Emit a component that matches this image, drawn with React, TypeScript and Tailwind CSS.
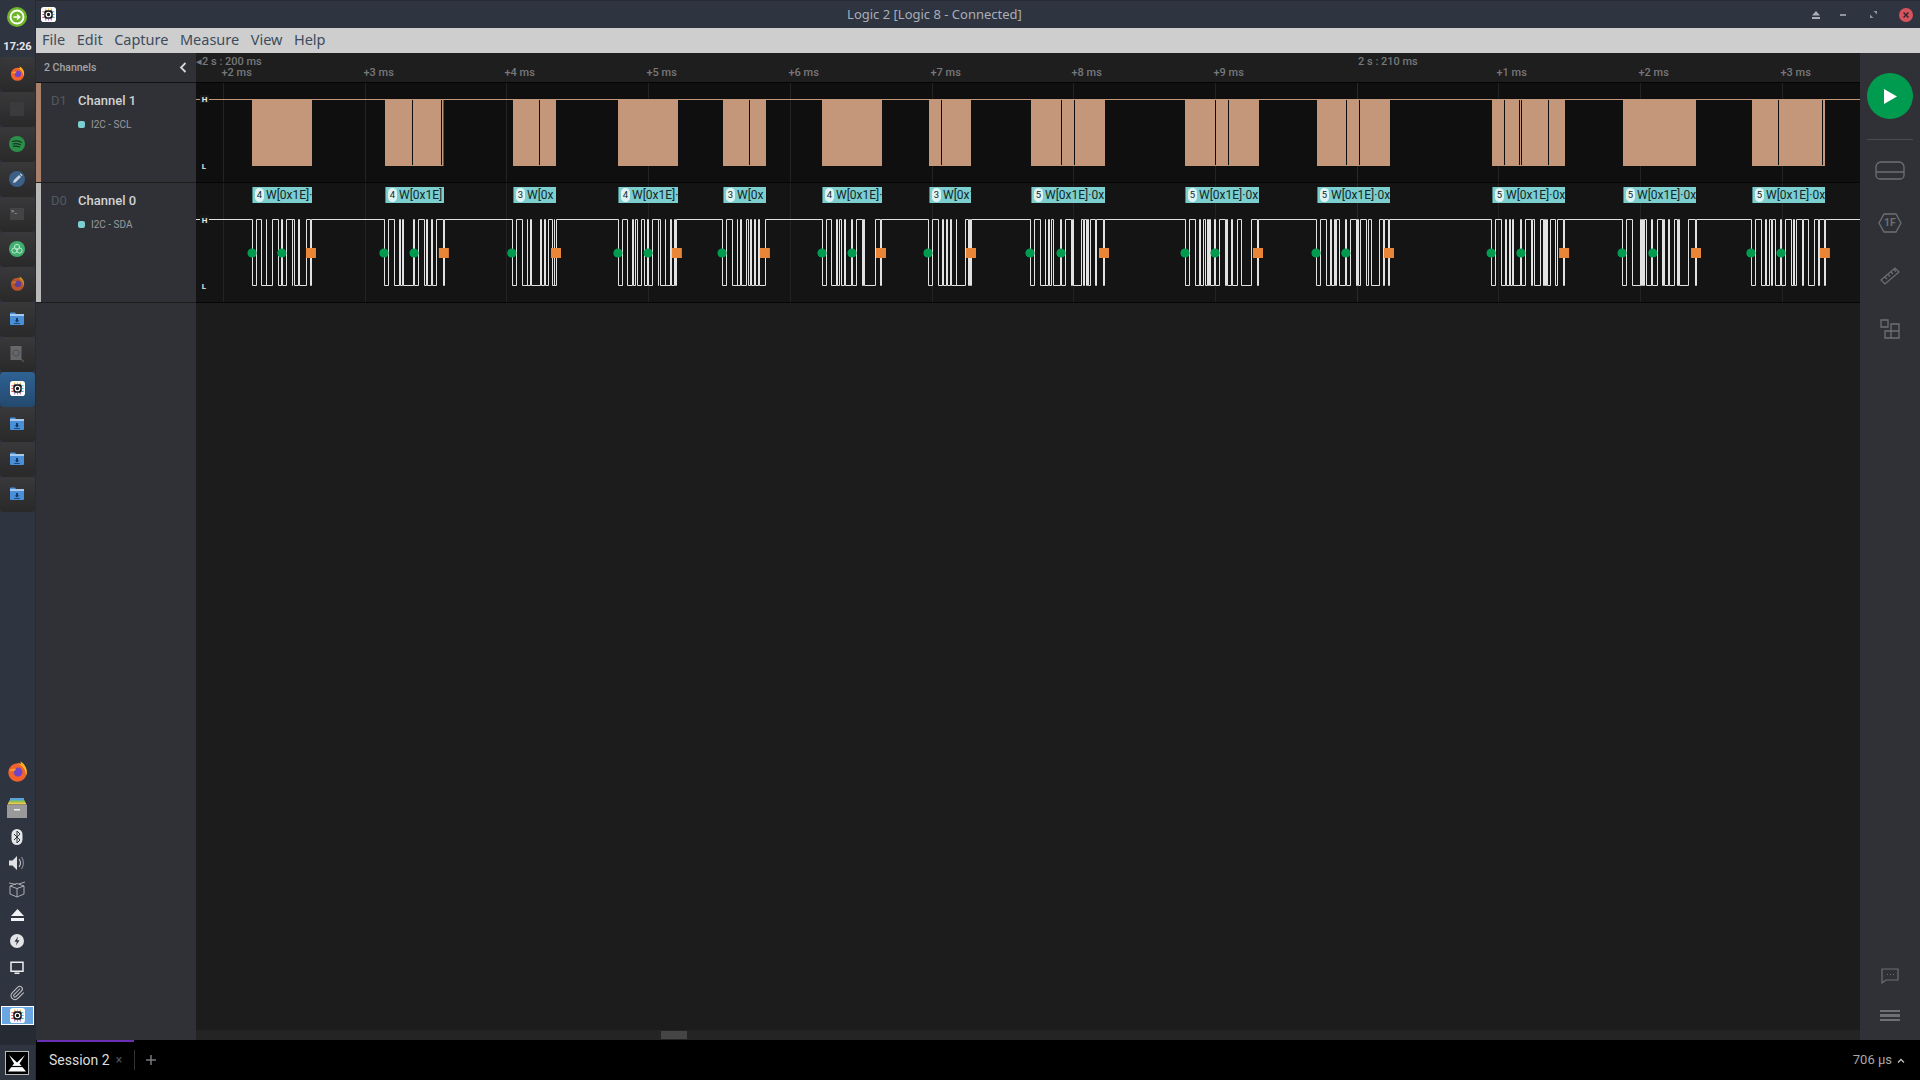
import { ReactNode } from 'react';
import { Paperclip } from 'lucide-react';

const font = { fontFamily: 'Roboto, "Noto Sans", sans-serif' };

// trace edges are measured off crops, so each group carries its own origin and scale
const a = (x: number) => 245 + x / 2.987;
const b = (x: number) => 815 + x / 3;
const c = (x: number) => 1310 + x / 2.987;

interface Burst {
  start: number;
  end: number;
  gaps: number[];
  count: number;
  label: string;
  edges: number[];
  starts: number[];
  stop: number;
}

const bursts: Burst[] = [
  { start: 252, end: 312, gaps: [], count: 4, label: 'W[0x1E]·', edges: [22, 35, 49, 64.5, 65.5, 83, 100, 109, 112, 124, 141, 143, 147, 159, 162, 185, 196, 198].map(a), starts: [a(21), a(110)], stop: a(197) },
  { start: 385, end: 443.5, gaps: [412, 441.5], count: 4, label: 'W[0x1E]', edges: [416, 429, 446, 462, 463.5, 470, 473, 504, 507, 519, 536, 542, 545, 558, 559.5, 572, 592, 595].map(a), starts: [a(415), a(505)], stop: a(594) },
  { start: 513, end: 556, gaps: [539.5], count: 3, label: 'W[0x', edges: [798, 811, 828, 843, 844.5, 852, 855, 882, 885, 894, 897, 907, 918, 923.5, 925, 931].map(a), starts: [a(797)], stop: a(929) },
  { start: 618, end: 678, gaps: [], count: 4, label: 'W[0x1E]·', edges: [1115, 1128, 1143, 1158, 1159.5, 1166, 1173, 1185, 1194, 1202, 1205, 1218, 1234, 1236, 1240, 1256, 1257.5, 1270, 1273, 1283, 1287, 1290].map(a), starts: [a(1114), a(1204)], stop: a(1290) },
  { start: 723, end: 766, gaps: [749.5], count: 3, label: 'W[0x', edges: [1426, 1439, 1456, 1470, 1472, 1480, 1483, 1497, 1503, 1509, 1512, 1521, 1524, 1533, 1537, 1554].map(a), starts: [a(1425)], stop: a(1553) },
  { start: 822, end: 882, gaps: [], count: 4, label: 'W[0x1E]·', edges: [22, 35, 49, 64.5, 66, 73, 80, 87, 90, 109, 112, 125, 142, 144, 148, 182, 196, 199].map(b), starts: [b(21), b(111)], stop: b(198) },
  { start: 929, end: 971, gaps: [941], count: 3, label: 'W[0x1', edges: [340, 353, 370, 382, 385, 394, 397, 406, 409, 424, 425.5, 452, 460, 463, 466, 469].map(b), starts: [b(339)], stop: b(468) },
  { start: 1031, end: 1105, gaps: [1061.4, 1074.4], count: 5, label: 'W[0x1E]·0x', edges: [646, 659, 676, 691, 692.5, 701, 704, 709, 714, 737, 740, 752, 769, 771, 776, 798, 805, 807, 815, 817, 819, 825, 841, 844, 865, 868].map(b), starts: [b(645), b(738)], stop: b(867) },
  { start: 1185, end: 1259, gaps: [1215.6, 1228.6], count: 5, label: 'W[0x1E]·0x', edges: [1111, 1124, 1141, 1154, 1157, 1165, 1172, 1177, 1180, 1184, 1187, 1199, 1202, 1214, 1231, 1233, 1237, 1249, 1252, 1268, 1280, 1310, 1327, 1330].map(b), starts: [b(1110), b(1200)], stop: b(1329) },
  { start: 1317, end: 1390, gaps: [1346.5, 1359.5], count: 5, label: 'W[0x1E]·0x', edges: [19, 32, 49, 61, 64, 73, 76, 79, 88, 106, 108.5, 120, 138, 141, 144, 150, 168, 175, 185, 208, 220, 222, 235, 237.5].map(c), starts: [c(18), c(107)], stop: c(236) },
  { start: 1492, end: 1565, gaps: [1504.3, 1519.7, 1521.7, 1548.3], count: 5, label: 'W[0x1E]·0x', edges: [542, 555, 572, 584, 587, 596, 599, 604, 607, 628, 631, 645, 661, 666, 670, 688, 696, 699, 702, 706, 708.5, 718, 733, 740, 757, 760].map(c), starts: [c(541), c(630)], stop: c(759) },
  { start: 1623, end: 1696, gaps: [], count: 5, label: 'W[0x1E]·0x', edges: [933, 946, 964, 988, 990, 993, 996, 1000, 1005, 1019, 1022, 1038, 1052, 1056, 1060, 1070, 1075, 1088, 1098, 1102, 1103.5, 1130, 1151, 1154].map(c), starts: [c(932), c(1024)], stop: c(1153) },
  { start: 1752, end: 1825, gaps: [1778.3, 1822.7], count: 5, label: 'W[0x1E]·0x', edges: [1318, 1330, 1348, 1362, 1363.5, 1373, 1378, 1381, 1390, 1405, 1408, 1420, 1438, 1444, 1447, 1453, 1472, 1474, 1488, 1507, 1519, 1522, 1536, 1539].map(c), starts: [c(1317), c(1407)], stop: c(1538) },
];

const ticks = ['+2 ms', '+3 ms', '+4 ms', '+5 ms', '+6 ms', '+7 ms', '+8 ms', '+9 ms', '', '+1 ms', '+2 ms', '+3 ms'];
const tickX = (i: number) => Math.floor(223.5 + i * 141.7 - 196) + 0.5;
const WIDTH = 1664;

function LogicLogo({ size = 15 }: { size?: number }) {
  return (
    <svg width={size} height={size} viewBox="0 0 16 16">
      <rect width="16" height="16" rx="3" fill="#fff" />
      <path d="M5 1.500v2M8 1.500v2M11 1.500v2" stroke="#f5b82e" strokeWidth="1.200" />
      <path d="M1.500 5h2M1.500 8h2M1.500 11h2" stroke="#e5484d" strokeWidth="1.200" />
      <path d="M12.500 5h2M12.500 8h2M12.500 11h2" stroke="#38b6e8" strokeWidth="1.200" />
      <path d="M5 12.500v2M8 12.500v2M11 12.500v2" stroke="#b06ad9" strokeWidth="1.200" />
      <rect x="3.500" y="3.500" width="9" height="9" rx="2" fill="#16161a" />
      <circle cx="8" cy="8" r="2.400" fill="none" stroke="#fff" strokeWidth="1.300" />
    </svg>
  );
}

function Firefox({ size = 21, dim = false }: { size?: number; dim?: boolean }) {
  return (
    <svg width={size} height={size} viewBox="0 0 20 20" className={dim ? 'opacity-70' : ''}>
      <circle cx="10" cy="11" r="8.800" fill="#f2632b" />
      <path d="M10 2.200c4 .2 8.800 3 8.800 8.800 0 1-.2 2-.5 2.800C18 8 15 4.500 10 2.200z" fill="#ffcb2e" />
      <path d="M12.500 .4c3.500 1.500 6.200 5.300 6.300 9.400-1.400-3-3-4.300-5.500-5.300.2-1.300-.1-2.900-.8-4.100z" fill="#ffb020" />
      <circle cx="10.500" cy="10.500" r="4.200" fill="#6f45c9" />
      <path d="M2 9c1.500-1.500 4-2 7-1.500L6.500 10z" fill="#ff9a2e" />
    </svg>
  );
}

function Folder() {
  return (
    <svg width="14" height="13" viewBox="0 0 14 13">
      <path d="M0 1.500A1 1 0 0 1 1 .5h4l1 1.500h8v10a1 1 0 0 1-1 1H1a1 1 0 0 1-1-1z" fill="#4a90d9" />
      <rect x="0" y="2" width="14" height="2" fill="#a5c8ec" />
      <path d="M6 6h2v2.500h1.500L7 10.500 4.500 8.500H6zM4 11h6v.8H4z" fill="#123a66" />
    </svg>
  );
}

function Tile({ children, active = false }: { children?: ReactNode; active?: boolean }) {
  return (
    <div
      className={
        active
          ? 'w-[35px] h-[35px] pb-[2px] pr-[1px] rounded-[4px] flex items-center justify-center bg-linear-to-b from-[#2f6293] to-[#24496e]'
          : 'w-[35px] h-[35px] pb-[2px] pr-[1px] rounded-[4px] flex items-center justify-center bg-linear-to-b from-[#39393b] to-[#29292a]'
      }
    >
      {children}
    </div>
  );
}

function Dock() {
  return (
    <div className="w-[36px] h-full shrink-0 flex flex-col bg-[#2e3440] border-r border-[#262a33]">
      <div className="h-[34px] flex items-center justify-center pr-[1px]">
        <svg width="20" height="20" viewBox="0 0 20 20">
          <circle cx="10" cy="10" r="10" fill="#6fb52c" />
          <circle cx="10" cy="10" r="6.500" fill="none" stroke="#fff" strokeWidth="1.800" />
          <path d="M6.500 10h6M10 7.500l2.700 2.500L10 12.500" fill="none" stroke="#fff" strokeWidth="1.500" />
        </svg>
      </div>
      <div className="h-[23px] pt-[3px] flex items-center justify-center text-[11px] font-bold text-[#e4e8ee]" style={font}>
        17:26
      </div>
      <Tile><Firefox size={15} /></Tile>
      <Tile><div className="w-[14px] h-[14px] bg-[#3b3b3d]" /></Tile>
      <Tile>
        <svg width="16" height="16" viewBox="0 0 16 16">
          <circle cx="8" cy="8" r="8" fill="#2b8f4a" />
          <path d="M3.500 5.500c3-.9 6-.7 9 .8M4 8c2.500-.7 5-.5 7.500.7M4.500 10.400c2-.5 4.200-.4 6 .6" fill="none" stroke="#17331f" strokeWidth="1.200" strokeLinecap="round" />
        </svg>
      </Tile>
      <Tile>
        <svg width="16" height="16" viewBox="0 0 16 16">
          <circle cx="8" cy="8" r="8" fill="#3b5f87" />
          <path d="M4 12l.7-2.700 5.300-5.300 2 2-5.300 5.300zM10.700 3.300l1-.8 1.800 1.800-.8 1z" fill="#c9d3de" />
        </svg>
      </Tile>
      <Tile>
        <div className="w-[14px] h-[12px] bg-[#444446] text-[6px] leading-[6px] text-[#cfcfcf] pl-[1px]" style={font}>
          &gt;_
        </div>
      </Tile>
      <Tile>
        <svg width="16" height="16" viewBox="0 0 16 16">
          <circle cx="8" cy="8" r="8" fill="#3fae6e" />
          <circle cx="8" cy="6" r="2.600" fill="none" stroke="#bfe9cf" />
          <circle cx="5.500" cy="9.500" r="2.600" fill="none" stroke="#bfe9cf" />
          <circle cx="10.500" cy="9.500" r="2.600" fill="none" stroke="#bfe9cf" />
        </svg>
      </Tile>
      <Tile><Firefox size={15} dim /></Tile>
      <Tile><Folder /></Tile>
      <Tile>
        <svg width="14" height="16" viewBox="0 0 14 16" className="opacity-60">
          <rect x="0.500" width="11" height="14" fill="#8a8a8a" />
          <circle cx="6" cy="7" r="3" fill="none" stroke="#5a6a78" strokeWidth="1.200" />
          <path d="M11 13l3 3" stroke="#777" strokeWidth="1.200" />
        </svg>
      </Tile>
      <Tile active><LogicLogo /></Tile>
      <Tile><Folder /></Tile>
      <Tile><Folder /></Tile>
      <Tile><Folder /></Tile>

      <div className="flex-1" />

      <div className="flex flex-col items-center pr-[1px]">
        <div className="h-[35px] pb-[7px] flex items-center"><Firefox /></div>
        <div className="h-[32px] flex items-center">
          <svg width="20" height="20" viewBox="0 0 20 20">
            <rect x="3" y="0" width="14" height="3" fill="#5aa3d8" />
            <rect x="2" y="2.500" width="16" height="3" fill="#8cc152" />
            <rect x="1" y="4.500" width="18" height="2" fill="#f0c94a" />
            <path d="M0 6.500h20V20H0z" fill="#9a9a9a" />
            <rect x="7" y="11" width="6" height="1.500" fill="#f0f0f0" />
          </svg>
        </div>
        <div className="h-[26px] flex items-center">
          <svg width="12" height="16" viewBox="0 0 12 16">
            <rect width="11" height="16" x="0.500" rx="5.500" fill="#e3e5e8" />
            <path d="M3 5l6 6-3 3V2l3 3-6 6" fill="none" stroke="#2e3440" strokeWidth="1" />
          </svg>
        </div>
        <div className="h-[26px] flex items-center">
          <svg width="16" height="14" viewBox="0 0 16 14">
            <path d="M0 4.500h3.500L8 0v14l-4.500-4.500H0z" fill="#dfe1e4" />
            <path d="M10 3c1.800 2.400 1.800 5.600 0 8" fill="none" stroke="#dfe1e4" strokeWidth="1.200" opacity="0.800" />
            <path d="M12.500 1c2.500 3.500 2.500 8.500 0 12" fill="none" stroke="#8a8f99" strokeWidth="1.100" />
          </svg>
        </div>
        <div className="h-[26px] flex items-center">
          <svg width="18" height="17" viewBox="0 0 18 17" fill="none" stroke="#a9adb3" strokeWidth="1">
            <path d="M2 5l7 2.500 7-2.500v8L9 16l-7-3zM9 7.500V16M2 5l7-2.500L16 5M1 2l7 1.500M17 1l-6 2" />
          </svg>
        </div>
        <div className="h-[25px] flex items-center">
          <svg width="13" height="12" viewBox="0 0 13 12">
            <path d="M6.500 0L13 7H0z" fill="#f1f2f3" />
            <rect y="9" width="13" height="3" fill="#f1f2f3" />
          </svg>
        </div>
        <div className="h-[28px] flex items-center">
          <svg width="14" height="14" viewBox="0 0 14 14">
            <circle cx="7" cy="7" r="7" fill="#e3e4e6" />
            <path d="M8 2.500L4.500 7.800h2.300L6 11.500l3.500-5.300H7.200z" fill="#2e3440" />
          </svg>
        </div>
        <div className="h-[25px] flex items-center">
          <svg width="14" height="13" viewBox="0 0 14 13">
            <path d="M1 1.200h12v9H1zM4.500 12.200h5" fill="none" stroke="#eceded" strokeWidth="1.500" />
          </svg>
        </div>
        <div className="h-[26px] flex items-center">
          <Paperclip size={16} color="#bfc1c4" strokeWidth={1.6} />
        </div>
      </div>
      <div className="mx-[1px] h-[19px] flex items-center justify-center bg-[#6aa7e2] border border-white">
        <LogicLogo />
      </div>
      <div className="h-[20px] bg-[#252a33]" />
      <div className="h-[35px] flex items-center justify-center pr-[1px]">
        <svg width="24" height="24" viewBox="0 0 24 24">
          <rect x="0.500" y="0.500" width="23" height="23" fill="#000" stroke="#b9b9b9" />
          <path d="M4 4l8 7.500L20 4l-5.500 8.500 6.500 8H3l6-8z" fill="#fff" />
          <path d="M4 15.500h16" stroke="#000" strokeWidth="1.200" />
        </svg>
      </div>
    </div>
  );
}

function TitleBar() {
  return (
    <div className="h-[28px] shrink-0 bg-[#2e3440] border-t border-[#262a33] flex items-center pl-[5px] pr-[4px] relative">
      <LogicLogo />
      <div className="flex-1 text-center text-[13px] text-[#a9aeb8] pl-[2px]" style={{ fontFamily: '"Noto Sans", sans-serif' }}>
        Logic 2 [Logic 8 - Connected]
      </div>
      <div className="flex items-center">
        <svg width="10" height="8" viewBox="0 0 10 8" className="mr-[19px]">
          <path d="M5 0l4 4.500H1z" fill="#a9aeb8" />
          <rect x="1" y="6" width="8" height="2" fill="#a9aeb8" />
        </svg>
        <div className="w-[6px] h-[2px] bg-[#8f94a0] mr-[24px]" />
        <svg width="7" height="7" viewBox="0 0 7 7" className="mr-[22px]">
          <path d="M3.500 0H7v3.500zM0 3.500V7h3.500z" fill="#8f94a0" />
        </svg>
        <div className="w-[14px] h-[14px] rounded-full bg-[#d9535f] flex items-center justify-center mr-[3px]">
          <svg width="6" height="6" viewBox="0 0 6 6">
            <path d="M.5.500l5 5M5.500.500l-5 5" stroke="#2e2a30" strokeWidth="1.500" />
          </svg>
        </div>
      </div>
    </div>
  );
}

function MenuBar() {
  return (
    <div
      className="h-[25px] shrink-0 bg-[#cecece] flex items-center gap-[11.500px] pl-[6px] pb-[2px] text-[14.500px] text-[#3d4c5c]"
      style={{ fontFamily: '"Noto Sans", sans-serif' }}
    >
      <span>File</span>
      <span>Edit</span>
      <span>Capture</span>
      <span>Measure</span>
      <span>View</span>
      <span>Help</span>
    </div>
  );
}

function ChannelLabel({ id, name, analyzer, strip, height }: { id: string; name: string; analyzer: string; strip: string; height: string }) {
  return (
    <div className={`${height} flex border-b border-[#1c1c1c]`}>
      <div className={`w-[5px] ${strip}`} />
      <div className="flex-1 pl-[10px] pt-[8px]">
        <div className="flex items-center">
          <span className="w-[27px] text-[13px] text-[#55585e]">{id}</span>
          <span className="text-[13px] font-medium text-[#d0d1d3]">{name}</span>
        </div>
        <div className="flex items-center mt-[6px] ml-[27px]">
          <span className="w-[7px] h-[7px] rounded-[2px] bg-[#7ccfcf] mr-[6px]" />
          <span className="text-[10px] text-[#9a9b9e]">{analyzer}</span>
        </div>
      </div>
    </div>
  );
}

function Sidebar() {
  return (
    <div className="w-[160px] shrink-0 bg-[#2f3136] flex flex-col" style={font}>
      <div className="h-[30px] flex items-center justify-between pl-[8px] pr-[9px] border-b border-[#111]">
        <span className="text-[10.500px] font-medium text-[#a4a5a8]">2 Channels</span>
        <svg width="8" height="11" viewBox="0 0 8 11">
          <path d="M6.500 1L2 5.500 6.500 10" fill="none" stroke="#d5d6d8" strokeWidth="1.800" />
        </svg>
      </div>
      <ChannelLabel id="D1" name="Channel 1" analyzer="I2C - SCL" strip="bg-[#a9806a]" height="h-[100px]" />
      <ChannelLabel id="D0" name="Channel 0" analyzer="I2C - SDA" strip="bg-[#b9b9b9]" height="h-[120px]" />
    </div>
  );
}

function GridLines({ height }: { height: number }) {
  return (
    <>
      {ticks.map((_, i) => (
        <line key={i} x1={tickX(i)} x2={tickX(i)} y1={0} y2={height} stroke={i === 8 ? '#2a2a2a' : '#232323'} strokeWidth="1" />
      ))}
    </>
  );
}

function LevelMarks({ high, low }: { high: number; low: number }) {
  const textProps = { fontSize: 8, fontWeight: 700, fill: '#e8e8e8', textAnchor: 'middle' as const, style: font };
  return (
    <>
      <rect x={4} y={high - 4} width={9} height={8} fill="#1a1a1a" />
      <text x={8.500} y={high + 3} {...textProps}>H</text>
      <text x={8} y={low + 3} {...textProps}>L</text>
    </>
  );
}

function ClockRow() {
  const high = 16;
  const low = 83;
  return (
    <div className="h-[100px] bg-[#0f0f0f] border-b border-[#050505]">
      <svg width={WIDTH} height={99} className="block">
        <GridLines height={99} />
        <line x1={0} x2={WIDTH} y1={high + 0.500} y2={high + 0.500} stroke="#c4967a" strokeWidth="1" />
        {bursts.map((burst) => (
          <g key={burst.start}>
            <rect x={burst.start - 196} y={high} width={burst.end - burst.start} height={low - high} fill="#c4967a" />
            {burst.gaps.map((gap) => (
              <rect key={gap} x={Math.floor(gap) - 196} y={high + 1} width={1} height={low - high - 2} fill="#0f0f0f" />
            ))}
          </g>
        ))}
        <LevelMarks high={high} low={low} />
      </svg>
    </div>
  );
}

function tracePath(high: number, low: number) {
  let d = `M0 ${high}`;
  bursts.forEach((burst) => {
    burst.edges.forEach((x, i) => {
      // snap to the pixel grid so single edges stay one pixel wide
      const px = Math.floor(x - 196) + 0.5;
      d += ` H${px} V${i % 2 === 0 ? low : high}`;
    });
  });
  return `${d} H${WIDTH}`;
}

function DataRow() {
  const high = 36.500;
  const low = 102.500;
  return (
    <div className="h-[120px] bg-[#141414] border-b border-[#050505] relative overflow-hidden">
      <svg width={WIDTH} height={119} className="block">
        <GridLines height={119} />
        <path d={tracePath(high, low)} fill="none" stroke="#e2e2e2" strokeWidth="1" />
        {bursts.map((burst) => (
          <g key={burst.start}>
            {burst.starts.map((x) => (
              <circle key={x} cx={x - 196} cy={70} r={4.600} fill="#009b4f" />
            ))}
            <rect x={burst.stop - 196 - 5} y={65} width={10} height={10} fill="#e98537" />
          </g>
        ))}
        <LevelMarks high={high} low={low} />
      </svg>
      {bursts.map((burst) => (
        <div
          key={burst.start}
          className="absolute top-[4px] h-[16px] bg-[#7dcfcf] border-l border-[#4c7f80] overflow-hidden flex items-center whitespace-nowrap text-[12px] text-[#12272a]"
          style={{ ...font, left: burst.start - 196, width: burst.end - burst.start }}
        >
          <span className="w-[9px] h-[14px] ml-[2px] mr-[2px] shrink-0 rounded-[5px] bg-[#e0f4f4] text-[9.500px] leading-[14px] text-center">
            {burst.count}
          </span>
          {burst.label}
        </div>
      ))}
    </div>
  );
}

function Timeline() {
  return (
    <div className="flex-1 flex flex-col min-w-0 bg-[#1c1c1c]">
      <div className="h-[30px] shrink-0 relative bg-[#1e1e1e] border-b border-[#050505] text-[11px] font-medium text-[#77787a]" style={font}>
        <span className="absolute left-[0px] top-[1px]">◂2 s : 200 ms</span>
        <span className="absolute left-[1162px] top-[1px]">2 s : 210 ms</span>
        {ticks.map((label, i) =>
          label ? (
            <span key={i} className="absolute top-[12px]" style={{ left: tickX(i) - 2 }}>
              {label}
            </span>
          ) : null,
        )}
      </div>
      <ClockRow />
      <DataRow />
      <div className="flex-1" />
      <div className="h-[10px] shrink-0 bg-[#242424] relative">
        <div className="absolute left-[465px] top-[1px] w-[26px] h-[8px] bg-[#454545]" />
      </div>
    </div>
  );
}

function RightPanel() {
  return (
    <div className="w-[60px] shrink-0 bg-[#2f3136] flex flex-col items-center text-[#6d6f75]">
      <div className="w-[46px] h-[46px] mt-[20px] rounded-full bg-[#009b4f] flex items-center justify-center">
        <svg width="14" height="15" viewBox="0 0 14 15">
          <path d="M1 0l13 7.500L1 15z" fill="#fff" />
        </svg>
      </div>
      <div className="w-[46px] h-px bg-[#4a4c52] mt-[20px]" />
      <svg width="30" height="20" viewBox="0 0 30 20" fill="none" stroke="currentColor" strokeWidth="1.300" className="mt-[20px]">
        <path d="M1 12V7a5 5 0 0 1 5-5h18a5 5 0 0 1 5 5v5zM1 12v3a4 4 0 0 0 4 4h20a4 4 0 0 0 4-4v-3" />
      </svg>
      <div className="mt-[33px] w-[24px] h-[20px] relative flex items-center justify-center text-[10.500px] font-bold" style={font}>
        <svg width="24" height="20" viewBox="0 0 24 20" fill="none" stroke="currentColor" strokeWidth="1.300" className="absolute inset-0">
          <path d="M6 1h12l5 9-5 9H6l-5-9z" />
        </svg>
        1F
      </div>
      <svg width="20" height="20" viewBox="0 0 20 20" fill="none" stroke="currentColor" strokeWidth="1.200" className="mt-[33px]">
        <path d="M1 14L15 2l4 4L5 18zM5 11l2 2M8 8.500l2 2M11 6l2 2M14 3.500l2 2" />
      </svg>
      <svg width="20" height="20" viewBox="0 0 20 20" fill="none" stroke="currentColor" strokeWidth="1.300" className="mt-[33px]">
        <path d="M1 1h7v7H1zM11 5h8v7h-8zM5 12h6v7H5zM11 12h8v7h-8z" />
      </svg>
      <div className="flex-1" />
      <svg width="18" height="16" viewBox="0 0 18 16" fill="none" stroke="currentColor" strokeWidth="1.200">
        <path d="M1 1h16v11H5l-4 3z" />
        <path d="M6 6.500h1M9 6.500h1M12 6.500h1" />
      </svg>
      <div className="mt-[26px] mb-[19px] flex flex-col gap-[2px]">
        <div className="w-[20px] h-[2.500px] bg-current" />
        <div className="w-[20px] h-[2.500px] bg-current" />
        <div className="w-[20px] h-[2.500px] bg-current" />
      </div>
    </div>
  );
}

function SessionBar() {
  return (
    <div className="h-[40px] shrink-0 bg-black flex items-center relative" style={font}>
      <div className="w-[97px] h-[40px] ml-px border-t-2 border-[#6a2fb5] flex items-center pl-[12px] pb-[2px] shrink-0">
        <span className="text-[14px] text-[#dcdcdc]">Session 2</span>
        <span className="text-[12px] text-[#55585e] ml-[6px]">×</span>
      </div>
      <div className="w-px h-[20px] bg-[#333]" />
      <svg width="10" height="10" viewBox="0 0 10 10" className="ml-[11px]">
        <path d="M5 0v10M0 5h10" stroke="#77797d" strokeWidth="1.500" />
      </svg>
      <div className="flex-1" />
      <span className="text-[13px] text-[#a8a8a8] mr-[5px]">706 µs</span>
      <svg width="8" height="5" viewBox="0 0 8 5" className="mr-[15px]">
        <path d="M1 4.500l3-3 3 3" fill="none" stroke="#c0c0c0" strokeWidth="1.300" />
      </svg>
    </div>
  );
}

export default function App() {
  return (
    <div className="w-[1920px] h-[1080px] flex overflow-hidden bg-[#1c1c1c]">
      <Dock />
      <div className="flex-1 min-w-0 flex flex-col">
        <TitleBar />
        <MenuBar />
        <div className="flex-1 min-h-0 flex">
          <Sidebar />
          <Timeline />
          <RightPanel />
        </div>
        <SessionBar />
      </div>
    </div>
  );
}
